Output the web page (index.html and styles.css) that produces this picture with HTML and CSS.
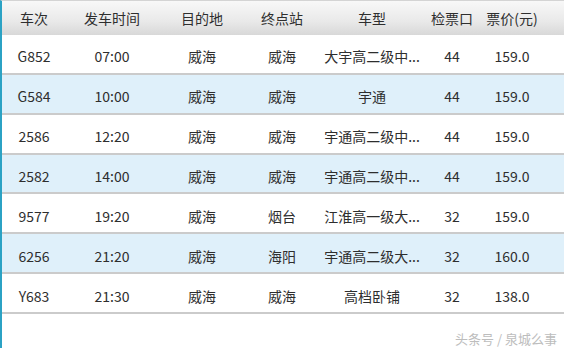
FILE: index.html
```html
<!DOCTYPE html>
<html>
<head>
<meta charset="utf-8">
<link rel="stylesheet" href="styles.css">
</head>
<body>
<div class="page">
  <div class="row head">
    <span>车次</span><span>发车时间</span><span>目的地</span><span>终点站</span><span>车型</span><span>检票口</span><span>票价(元)</span>
  </div>
  <div class="row">
    <span>G852</span><span>07:00</span><span>威海</span><span>威海</span><span>大宇高二级中...</span><span>44</span><span>159.0</span>
  </div>
  <div class="row alt">
    <span>G584</span><span>10:00</span><span>威海</span><span>威海</span><span>宇通</span><span>44</span><span>159.0</span>
  </div>
  <div class="row">
    <span>2586</span><span>12:20</span><span>威海</span><span>威海</span><span>宇通高二级中...</span><span>44</span><span>159.0</span>
  </div>
  <div class="row alt">
    <span>2582</span><span>14:00</span><span>威海</span><span>威海</span><span>宇通高二级中...</span><span>44</span><span>159.0</span>
  </div>
  <div class="row">
    <span>9577</span><span>19:20</span><span>威海</span><span>烟台</span><span>江淮高一级大...</span><span>32</span><span>159.0</span>
  </div>
  <div class="row alt">
    <span>6256</span><span>21:20</span><span>威海</span><span>海阳</span><span>宇通高二级大...</span><span>32</span><span>160.0</span>
  </div>
  <div class="row">
    <span>Y683</span><span>21:30</span><span>威海</span><span>威海</span><span>高档卧铺</span><span>32</span><span>138.0</span>
  </div>
  <div class="footer">头条号 / 泉城么事</div>
</div>
</body>
</html>
```
FILE: styles.css
```css
html, body {
  margin: 0;
  padding: 0;
  background: #fff;
}
body {
  font-family: "Noto Sans CJK SC", "Open Sans", sans-serif;
  font-size: 14px;
  color: #2e2e2e;
}
.page {
  width: 564px;
  height: 348px;
  border-left: 2px solid #2ba2c4;
  border-top: 1px solid #d4d4d4;
  box-sizing: border-box;
  display: flex;
  flex-direction: column;
}
.row {
  display: grid;
  grid-template-columns: 64px 92px 88px 72px 108px 52px 68px 20px;
  height: 40px;
  align-items: center;
  border-bottom: 2px solid #cbcbcb;
  box-sizing: border-box;
  background: #fff;
}
.row span {
  text-align: center;
  white-space: nowrap;
  line-height: 1;
  padding-top: 5px;
}
.row.alt {
  background: #dff0fa;
}
.row.head {
  height: 34px;
  border-bottom: none;
  background: linear-gradient(#f8f8f8, #e9e9e9 60%, #d8d8d8);
}
.row.head span {
  padding-top: 0;
}
.footer {
  margin-top: 15px;
  align-self: flex-end;
  margin-right: 7px;
  font-size: 13px;
  color: #bdbdbd;
}
```
